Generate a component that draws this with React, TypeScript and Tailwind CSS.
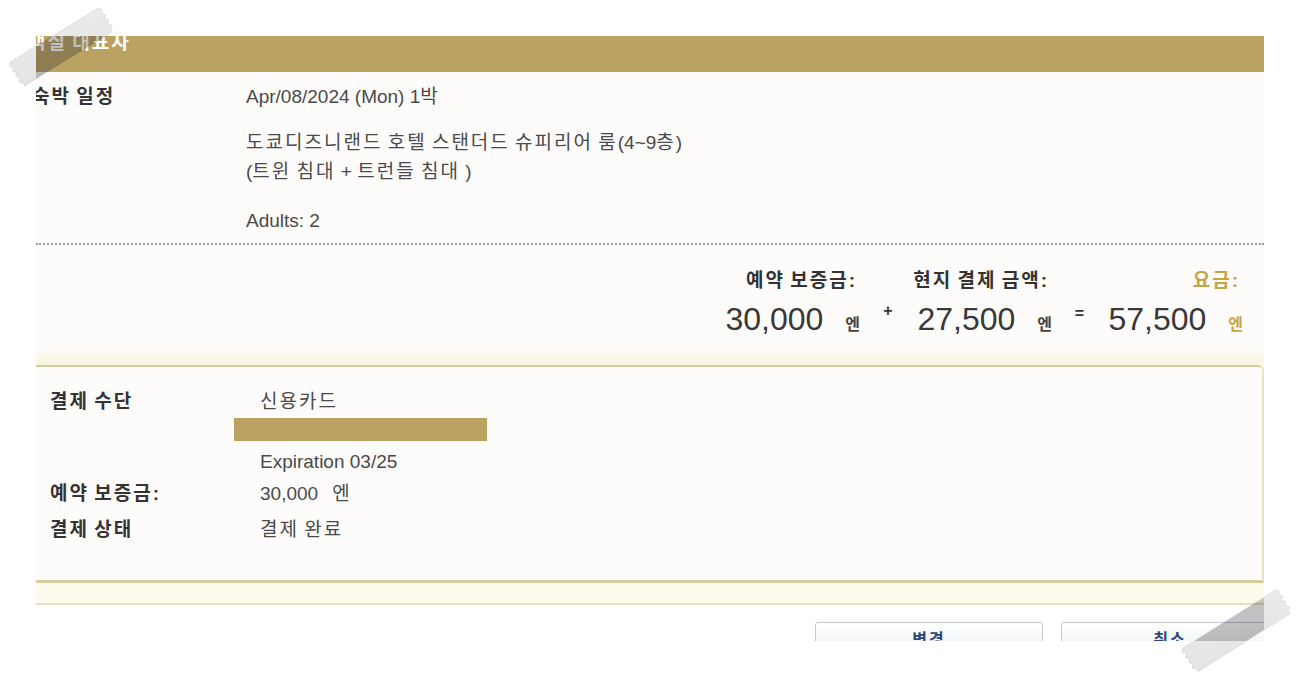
import React from "react";

const FONT = '"Liberation Sans", "Noto Sans CJK KR", Arial, sans-serif';

function tapePoints(x0: number, y0: number, angleDeg: number, L: number, W: number, n: number, a: number) {
  const t = (angleDeg * Math.PI) / 180;
  const c = Math.cos(t);
  const s = Math.sin(t);
  const local: [number, number][] = [];
  local.push([0, 0]);
  local.push([L, 0]);
  for (let i = 1; i < n; i++) {
    local.push([L + (i % 2 ? a : 0), (i * W) / n]);
  }
  local.push([L, W]);
  local.push([0, W]);
  for (let i = n - 1; i > 0; i--) {
    local.push([(i % 2 ? -a : 0), (i * W) / n]);
  }
  return local
    .map(([lx, ly]) => {
      const x = x0 + lx * c - ly * s;
      const y = y0 + lx * s + ly * c;
      return `${x.toFixed(1)},${y.toFixed(1)}`;
    })
    .join(" ");
}

const TAPE1 = tapePoints(10, 62, -31.5, 103, 28, 9, 3);
const TAPE2 = tapePoints(1183, 648, -32.2, 109, 28, 9, 3);

function Tapes({ dark }: { dark: boolean }) {
  const id = dark ? "tgd" : "tgl";
  return (
    <svg width="1300" height="678" viewBox="0 0 1300 678" className="block">
      <defs>
        <linearGradient id={id} x1="0" y1="0" x2="0.3" y2="1">
          {dark ? (
            <>
              <stop offset="0" stopColor="rgba(255,255,255,0.25)" />
              <stop offset="0.35" stopColor="rgba(40,40,40,0.28)" />
              <stop offset="1" stopColor="rgba(40,40,40,0.32)" />
            </>
          ) : (
            <>
              <stop offset="0" stopColor="rgba(236,236,236,0.95)" />
              <stop offset="1" stopColor="rgba(226,226,226,0.95)" />
            </>
          )}
        </linearGradient>
      </defs>
      <polygon points={TAPE1} fill={`url(#${id})`} stroke={dark ? "none" : "rgba(190,190,190,0.6)"} strokeWidth="0.6" />
      <polygon points={TAPE2} fill={`url(#${id})`} stroke={dark ? "none" : "rgba(190,190,190,0.6)"} strokeWidth="0.6" />
    </svg>
  );
}

// Wrap Hangul runs so they get the wider spacing of the original Korean font
function K({ t }: { t: string }) {
  const parts = t.split(/([\uAC00-\uD7A3]+)/);
  return (
    <>
      {parts.map((p, i) =>
        /[\uAC00-\uD7A3]/.test(p) ? (
          <span key={i} className="tracking-[2px]">
            {p}
          </span>
        ) : (
          <React.Fragment key={i}>{p}</React.Fragment>
        )
      )}
    </>
  );
}

function PriceCol({ label, value, gold }: { label: string; value: string; gold?: boolean }) {
  return (
    <div className="w-[136px] shrink-0 flex flex-col items-end">
      <div className={`h-[29px] leading-[29px] text-[19px] font-semibold pr-[5px] whitespace-nowrap ${gold ? "text-[#c5a443]" : "text-[#333333]"}`}>
        <K t={label} />
      </div>
      <div className="mt-[4px] h-[40px] flex items-baseline">
        <span className="text-[32px] leading-[40px] text-[#383838]">{value}</span>
        <span className={`ml-[22px] text-[16px] font-semibold ${gold ? "text-[#c5a443]" : "text-[#444444]"}`}>엔</span>
      </div>
    </div>
  );
}

export default function App() {
  return (
    <div className="relative w-[1300px] h-[678px] bg-white overflow-hidden" style={{ fontFamily: FONT }}>
      <div className="absolute left-0 top-0 z-0 pointer-events-none">
        <Tapes dark={false} />
      </div>
      <div className="relative z-10 ml-[36px] mt-[36px] w-[1228px] h-[605px] overflow-hidden bg-white">
        {/* header bar */}
        <div className="h-[36px] bg-[#b9a262] overflow-hidden">
          <div className="-mt-[3px] -ml-[8px] text-[19px] leading-[19px] font-bold text-white whitespace-nowrap">
            <K t="객실 대표자" />
          </div>
        </div>

        {/* stay info */}
        <div className="bg-[#fdfcfa]">
          <div className="pt-[10px] flex text-[19px] leading-[29px]">
            <div className="w-[214px] -ml-[4px] font-semibold text-[#333333] whitespace-nowrap">
              <K t="숙박 일정" />
            </div>
            <div className="text-[#4a4a4a] whitespace-nowrap">
              <div className="h-[29px]">
                <K t="Apr/08/2024 (Mon) 1박" />
              </div>
              <div className="mt-[17px]">
                <div className="h-[29px]">
                  <K t="도쿄디즈니랜드 호텔 스탠더드 슈피리어 룸(4~9층)" />
                </div>
                <div className="h-[29px]">
                  <K t="(트윈 침대 + 트런들 침대 )" />
                </div>
              </div>
              <div className="mt-[20px] h-[29px]">Adults: 2</div>
            </div>
          </div>
          <div className="mt-[8px] border-t-2 border-dotted border-[#9a9a9a]" />

          {/* prices */}
          <div className="h-[103px] pt-[21px] pr-[21px] flex justify-end">
            <PriceCol label="예약 보증금:" value="30,000" />
            <div className="w-[56px] shrink-0 flex justify-center pt-[35px]">
              <span className="text-[16px] leading-[19px] font-bold text-[#333333]">+</span>
            </div>
            <PriceCol label="현지 결제 금액:" value="27,500" />
            <div className="w-[55px] shrink-0 flex justify-center pt-[38px]">
              <span className="text-[16px] leading-[19px] font-bold text-[#333333]">=</span>
            </div>
            <PriceCol label="요금:" value="57,500" gold />
          </div>
          <div className="h-[17px] bg-gradient-to-b from-[#fdfcf9] to-[#f9f4e0]" />
        </div>

        {/* payment box */}
        <div className="bg-[#fdfcfa] border-t-2 border-r-2 border-b-[3px] border-t-[#d6cca3] border-r-[#e9e2c6] border-b-[#d8cc9c] rounded-tr-[6px]">
          <div className="pt-[20px] pb-[36px] pl-[14px] text-[19px] leading-[29px] whitespace-nowrap">
            <div className="flex h-[29px]">
              <div className="w-[210px] font-semibold text-[#333333]">
                <K t="결제 수단" />
              </div>
              <div className="text-[#4a4a4a]">
                <K t="신용카드" />
              </div>
            </div>
            <div className="flex mt-[2px]">
              <div className="w-[184px]" />
              <div className="w-[253px] h-[23px] bg-[#b9a262]" />
            </div>
            <div className="flex mt-[6px] h-[29px]">
              <div className="w-[210px]" />
              <div className="text-[#4a4a4a]">Expiration 03/25</div>
            </div>
            <div className="flex mt-[3px] h-[29px]">
              <div className="w-[210px] font-semibold text-[#333333]">
                <K t="예약 보증금:" />
              </div>
              <div className="text-[#4a4a4a]">
                30,000<span className="ml-[14px]">엔</span>
              </div>
            </div>
            <div className="flex mt-[7px] h-[29px]">
              <div className="w-[210px] font-semibold text-[#333333]">
                <K t="결제 상태" />
              </div>
              <div className="text-[#4a4a4a]">
                <K t="결제 완료" />
              </div>
            </div>
          </div>
        </div>
        <div className="h-[20px] bg-[#fefbec] border-b-2 border-[#e6dfc2] box-content" />

        {/* buttons */}
        <div className="mt-[17px] flex gap-[18px] pl-[779px]">
          <div className="shrink-0 w-[228px] h-[40px] rounded-t-[3px] border border-[#c3c8d1] bg-gradient-to-b from-white to-[#e8ecf1] flex justify-center pt-[7px]">
            <span className="text-[16px] leading-[20px] font-bold text-[#2b4677] tracking-[2px]">변경</span>
          </div>
          <div className="shrink-0 w-[228px] h-[40px] rounded-t-[3px] border border-[#c3c8d1] bg-gradient-to-b from-white to-[#e8ecf1] flex justify-center pt-[7px]">
            <span className="text-[16px] leading-[20px] font-bold text-[#2b4677] tracking-[2px] -ml-[10px]">취소</span>
          </div>
        </div>

        <div className="absolute -left-[36px] -top-[36px] pointer-events-none">
          <Tapes dark={true} />
        </div>
      </div>
    </div>
  );
}
